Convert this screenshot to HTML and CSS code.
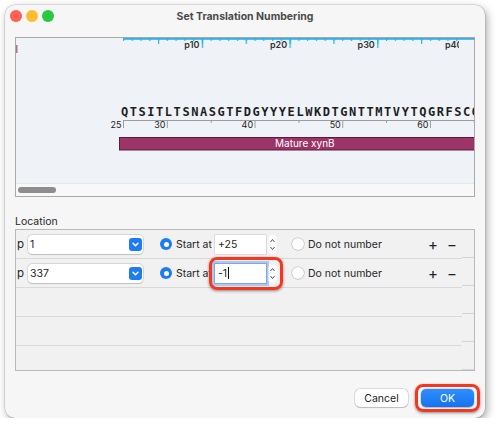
FILE: index.html
```html
<!DOCTYPE html>
<html>
<head>
    <meta charset="utf-8">
    <title>Set Translation Numbering</title>
    <link rel="stylesheet" href="styles.css">
</head>
<body>
    <div class="window">
        <div class="titlebar">
            <div class="lights">
                <span class="light red"></span>
                <span class="light yellow"></span>
                <span class="light green"></span>
            </div>
            <div class="title">Set Translation Numbering</div>
        </div>

        <!-- sequence preview -->
        <div class="seq_panel">
            <svg class="seq_view" width="458" height="145" viewBox="0 0 458 145">
                <defs>
                    <pattern id="tickMinor" patternUnits="userSpaceOnUse" x="106.9" y="0" width="8.77" height="3">
                        <rect width="1.2" height="3" fill="#2eb2e4"/>
                    </pattern>
                    <pattern id="tickMid" patternUnits="userSpaceOnUse" x="141.98" y="0" width="43.85" height="6">
                        <rect width="1.2" height="6" fill="#2eb2e4"/>
                    </pattern>
                    <pattern id="tickMajor" patternUnits="userSpaceOnUse" x="185.83" y="0" width="87.7" height="10">
                        <rect width="1.2" height="10" fill="#2eb2e4"/>
                    </pattern>
                    <pattern id="numShort" patternUnits="userSpaceOnUse" x="194.7" y="82" width="87.7" height="3">
                        <rect width="1" height="3" fill="#9d9d9d"/>
                    </pattern>
                    <pattern id="numLong" patternUnits="userSpaceOnUse" x="150.85" y="82" width="87.7" height="8">
                        <rect width="1" height="8" fill="#9d9d9d"/>
                    </pattern>
                    <clipPath id="rulerClip">
                        <rect x="0" y="0" width="443" height="20"/>
                    </clipPath>
                </defs>

                <rect x="0" y="7" width="1.5" height="8" fill="#b0708f"/>

                <!-- p numbering ruler -->
                <rect x="107" y="0" width="351" height="1.8" fill="#2eb2e4"/>
                <g clip-path="url(#rulerClip)">
                    <rect x="106.9" y="0" width="351" height="3" fill="url(#tickMinor)"/>
                    <rect x="106.9" y="0" width="351" height="6" fill="url(#tickMid)"/>
                    <rect x="106.9" y="0" width="351" height="10" fill="url(#tickMajor)"/>
                    <g class="ruler_label">
                        <text x="183.4" y="10.3">p10</text>
                        <text x="271.1" y="10.3">p20</text>
                        <text x="358.8" y="10.3">p30</text>
                        <text x="446.5" y="10.3">p40</text>
                    </g>
                </g>

                <text class="seq" x="105" y="77.7">QTSITLTSNASGTFDGYYYELWKDTGNTTMTVYTQGRFSCQ</text>

                <!-- residue numbering -->
                <rect x="107" y="82" width="351" height="1" fill="#9d9d9d"/>
                <rect x="107" y="82" width="1" height="8" fill="#9d9d9d"/>
                <rect x="107" y="82" width="351" height="3" fill="url(#numShort)"/>
                <rect x="107" y="82" width="351" height="8" fill="url(#numLong)"/>
                <g class="num_label">
                    <text x="105.5" y="90.3">25</text>
                    <text x="149.4" y="90.3">30</text>
                    <text x="237.1" y="90.3">40</text>
                    <text x="324.8" y="90.3">50</text>
                    <text x="412.5" y="90.3">60</text>
                </g>

                <!-- feature -->
                <rect x="103.5" y="99.5" width="360" height="12.5" fill="#9c3468" stroke="#5a1c3b"/>
                <text class="feat_label" x="259" y="108.8">Mature xynB</text>
            </svg>
            <div class="hscroll"><div class="thumb"></div></div>
        </div>

        <div class="section_label">Location</div>

        <div class="loc_table">
            <div class="loc_rows">
                <div class="loc_row">
                    <span class="prefix">p</span>
                    <div class="combo">
                        <span>1</span>
                        <span class="combo_btn">
                            <svg width="13" height="13" viewBox="0 0 13 13"><polyline points="4,5.3 6.5,7.8 9,5.3" fill="none" stroke="#fff" stroke-width="1.5" stroke-linecap="round" stroke-linejoin="round"/></svg>
                        </span>
                    </div>
                    <div class="choice start">
                        <span class="radio on"></span>
                        <span>Start at</span>
                    </div>
                    <div class="num_field">
                        <div class="num_input">+25</div>
                        <svg class="stepper" width="9" height="19" viewBox="0 0 9 19">
                            <rect x="0.5" y="0.5" width="8" height="18" rx="3" fill="#fff"/>
                            <polyline points="2.5,7 4.5,4.5 6.5,7" fill="none" stroke="#555" stroke-width="1"/>
                            <polyline points="2.5,12 4.5,14.5 6.5,12" fill="none" stroke="#555" stroke-width="1"/>
                        </svg>
                    </div>
                    <div class="choice skip">
                        <span class="radio off"></span>
                        <span>Do not number</span>
                    </div>
                    <div class="row_actions">
                        <span>+</span>
                        <span>−</span>
                    </div>
                </div>
                <div class="loc_row">
                    <span class="prefix">p</span>
                    <div class="combo">
                        <span>337</span>
                        <span class="combo_btn">
                            <svg width="13" height="13" viewBox="0 0 13 13"><polyline points="4,5.3 6.5,7.8 9,5.3" fill="none" stroke="#fff" stroke-width="1.5" stroke-linecap="round" stroke-linejoin="round"/></svg>
                        </span>
                    </div>
                    <div class="choice start">
                        <span class="radio on"></span>
                        <span>Start at</span>
                    </div>
                    <div class="num_field">
                        <div class="num_input focused">-1<span class="caret"></span></div>
                        <svg class="stepper" width="9" height="19" viewBox="0 0 9 19">
                            <rect x="0.5" y="0.5" width="8" height="18" rx="3" fill="#fff"/>
                            <polyline points="2.5,7 4.5,4.5 6.5,7" fill="none" stroke="#555" stroke-width="1"/>
                            <polyline points="2.5,12 4.5,14.5 6.5,12" fill="none" stroke="#555" stroke-width="1"/>
                        </svg>
                        <div class="callout"></div>
                    </div>
                    <div class="choice skip">
                        <span class="radio off"></span>
                        <span>Do not number</span>
                    </div>
                    <div class="row_actions">
                        <span>+</span>
                        <span>−</span>
                    </div>
                </div>
                <div class="loc_row"></div>
                <div class="loc_row"></div>
                <div class="loc_row"></div>
            </div>
            <div class="loc_gutter">
                <div class="gutter_cell"></div>
                <div class="gutter_cell"></div>
                <div class="gutter_cell"></div>
                <div class="gutter_cell"></div>
                <div class="gutter_cell"></div>
            </div>
        </div>

        <div class="footer">
            <button class="btn" type="button">Cancel</button>
            <div class="ok_wrap">
                <button class="btn primary" type="button">OK</button>
                <div class="callout ok"></div>
            </div>
        </div>
    </div>
</body>
</html>
```

FILE: styles.css
```css
body {
    margin: 0;
    background: #fff;
    font-family: Inter, "Liberation Sans", sans-serif;
    color: #262626;
}
.window {
    width: 480px;
    height: 413px;
    margin: 5px 0 0 5px;
    background: #f6f6f6;
    border-radius: 10px;
    box-shadow: 0 0 0 0.5px rgba(0, 0, 0, 0.18), 2px 3px 8px rgba(0, 0, 0, 0.35);
}

/* title bar */
.titlebar {
    display: grid;
    grid-template-columns: 1fr auto 1fr;
    align-items: center;
    height: 22px;
    padding: 0 5px;
}
.lights {
    display: flex;
    gap: 4px;
}
.light {
    width: 12px;
    height: 12px;
    border-radius: 50%;
}
.light.red { background: #fe5f57; }
.light.yellow { background: #febc2e; }
.light.green { background: #28c840; }
.title {
    font-weight: 700;
    font-size: 10.5px;
    color: #4a4a4a;
}

/* sequence preview */
.seq_panel {
    margin: 10px 10px 0;
    height: 160px;
    box-sizing: border-box;
    border: 1px solid #a9a9a9;
    background: #eff2f7;
    display: flex;
    flex-direction: column;
    overflow: hidden;
}
.seq_view {
    display: block;
    flex: none;
}
.ruler_label text {
    font-family: Inter, sans-serif;
    font-size: 9px;
    font-weight: 600;
    fill: #333;
    text-anchor: end;
}
.num_label text {
    font-family: Inter, sans-serif;
    font-size: 9px;
    fill: #222;
    text-anchor: end;
}
.seq {
    font-family: "DejaVu Sans Mono", monospace;
    font-size: 12px;
    font-weight: bold;
    letter-spacing: 1.545px;
    fill: #1e1e1e;
}
.feat_label {
    font-family: Inter, sans-serif;
    font-size: 10px;
    fill: #fff;
}
.hscroll {
    height: 13px;
    box-sizing: border-box;
    background: #f8f8f8;
    border-top: 1px solid #e6e6e6;
    padding: 3px 0 0 2px;
}
.thumb {
    width: 38px;
    height: 6px;
    border-radius: 3px;
    background: #8d8d8d;
}

.section_label {
    margin: 17px 10px 0;
    height: 15px;
    line-height: 15px;
    font-size: 10.5px;
}

/* location table */
.loc_table {
    margin: 0 10px;
    height: 142px;
    box-sizing: border-box;
    border: 1px solid #b9b9b9;
    background: #f1f1f1;
    display: flex;
    overflow: hidden;
    font-size: 10.5px;
}
.loc_rows {
    flex: 1;
}
.loc_row {
    height: 28px;
    border-bottom: 1px solid #d9d9d9;
    display: flex;
    align-items: center;
    padding-left: 1px;
}
.loc_gutter {
    width: 12px;
}
.gutter_cell {
    height: 27px;
    border-bottom: 1px solid #d4d4d4;
}
.prefix {
    width: 11px;
    font-size: 11.5px;
}
.combo {
    width: 115px;
    height: 19px;
    box-sizing: border-box;
    background: #fff;
    border-radius: 4px;
    box-shadow: 0 0 0 0.5px rgba(0, 0, 0, 0.2), 0 0.5px 1px rgba(0, 0, 0, 0.12);
    display: flex;
    align-items: center;
    justify-content: space-between;
    padding: 0 1px 0 2px;
}
.combo_btn {
    width: 13px;
    height: 13px;
    border-radius: 3px;
    background: #1d7cf5;
    display: flex;
}
.choice {
    display: flex;
    align-items: center;
}
.choice.start {
    margin-left: 17px;
    width: 55px;
}
.choice.skip {
    margin-left: 15px;
}
.radio {
    width: 12px;
    height: 12px;
    box-sizing: border-box;
    border-radius: 50%;
    margin-right: 4px;
    flex: none;
}
.radio.on {
    background: #1d7cf5;
    display: flex;
    align-items: center;
    justify-content: center;
}
.radio.on::after {
    content: "";
    width: 5px;
    height: 5px;
    border-radius: 50%;
    background: #fff;
}
.radio.off {
    background: #fff;
    box-shadow: 0 0 0 0.5px rgba(0, 0, 0, 0.25), 0 0.5px 1px rgba(0, 0, 0, 0.1);
}
.num_field {
    position: relative;
    display: flex;
    align-items: center;
}
.num_input {
    width: 51px;
    height: 19px;
    box-sizing: border-box;
    background: #fff;
    padding-left: 3px;
    display: flex;
    align-items: center;
    box-shadow: 0 0 0 0.5px rgba(0, 0, 0, 0.18);
}
.num_input.focused {
    box-shadow: 0 0 0 1px #7aa8ec, 0 0 0 3px rgba(120, 165, 235, 0.55);
}
.caret {
    width: 1px;
    height: 12px;
    background: #111;
    margin-left: 1px;
}
.stepper {
    margin-left: 2px;
    display: block;
}
.row_actions {
    margin-left: auto;
    padding-right: 4px;
    display: flex;
    gap: 7px;
    font-size: 15px;
    color: #222;
}
.row_actions span {
    width: 12px;
    text-align: center;
}

/* red callouts drawn over the controls */
.callout {
    position: absolute;
    top: -7px;
    left: -6px;
    right: -6px;
    bottom: -7px;
    border: 3px solid #f5371f;
    border-radius: 8px;
    box-shadow: 0 1px 3px rgba(0, 0, 0, 0.45);
}
.callout.ok {
    top: -5px;
    bottom: -5px;
}

/* buttons */
.footer {
    display: flex;
    justify-content: flex-end;
    gap: 13px;
    margin-top: 18px;
    padding-right: 11px;
}
.ok_wrap {
    position: relative;
}
.btn {
    display: block;
    width: 53px;
    height: 18px;
    padding: 0;
    border: none;
    border-radius: 5px;
    font-family: Inter, sans-serif;
    font-size: 10.5px;
    color: #222;
    background: #fff;
    box-shadow: 0 0 0 0.5px rgba(0, 0, 0, 0.2), 0 0.5px 1px rgba(0, 0, 0, 0.15);
}
.btn.primary {
    color: #fff;
    background: linear-gradient(#2f8efb, #1673f0);
}
```
